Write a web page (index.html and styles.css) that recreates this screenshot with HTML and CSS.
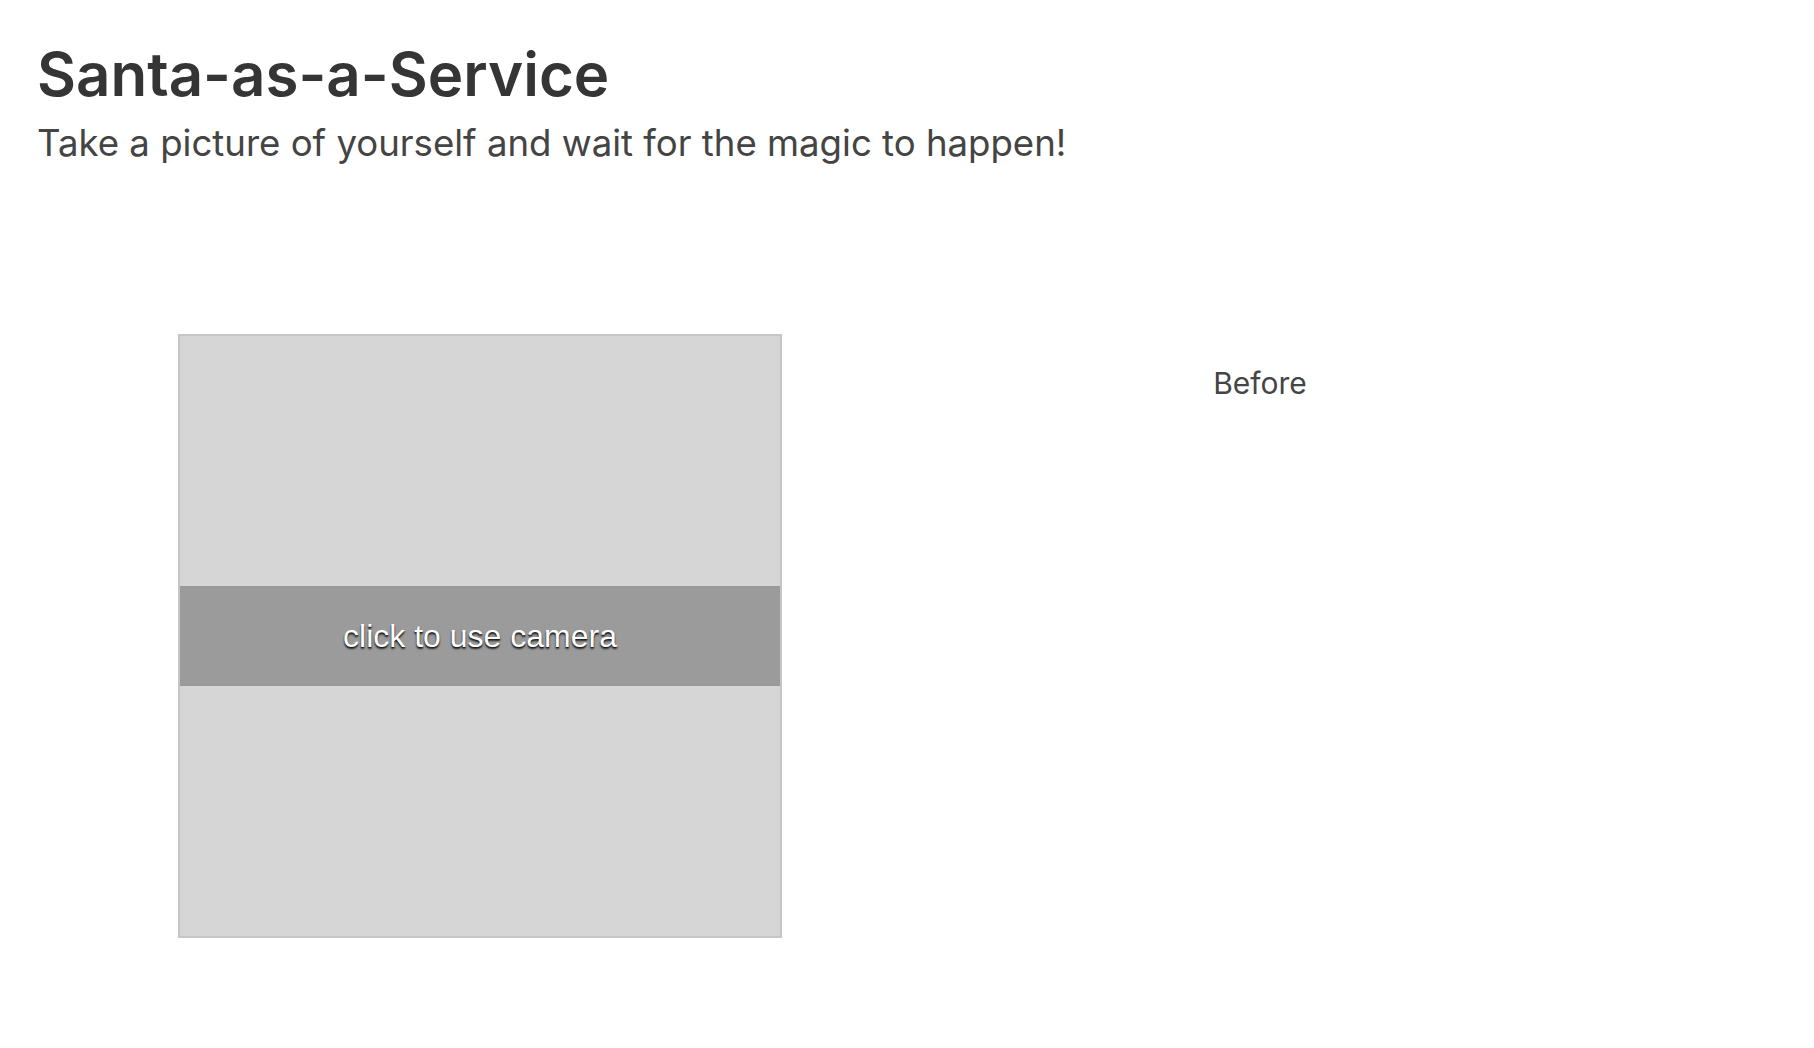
FILE: index.html
```html
<!DOCTYPE html>
<html lang="en">
<head>
<meta charset="utf-8">
<title>Santa-as-a-Service</title>
<link rel="stylesheet" href="styles.css">
</head>
<body>
<header class="header">
  <h1 class="title">Santa-as-a-Service</h1>
  <p class="subtitle">Take a picture of yourself and wait for the magic to happen!</p>
</header>
<main class="stage">
  <section class="col col-left">
    <div class="camera">
      <div class="camera-band">click to use camera</div>
    </div>
  </section>
  <section class="col col-right">
    <div class="label">Before</div>
  </section>
</main>
</body>
</html>
```
FILE: styles.css
```css
html, body {
  margin: 0;
  padding: 0;
  background: #ffffff;
}
body {
  font-family: Inter, "Noto Sans", "Liberation Sans", sans-serif;
  color: #333333;
}
.header {
  padding: 38px 37px 0 37px;
}
.title {
  margin: 0;
  font-size: 60px;
  font-weight: 600;
  line-height: 72px;
  color: #353535;
}
.subtitle {
  margin: 11px 0 0 0;
  font-size: 36.6px;
  font-weight: 400;
  line-height: 44px;
  color: #444444;
}
.stage {
  display: flex;
  padding-left: 90px;
  margin-top: 169px;
}
.col {
  width: 780px;
  display: flex;
  justify-content: center;
  align-items: flex-start;
}
.camera {
  width: 600px;
  height: 600px;
  border: 2px solid #c6c6c6;
  background: #d6d6d6;
  display: flex;
  align-items: center;
}
.camera-band {
  width: 100%;
  height: 100px;
  background: #9b9b9b;
  display: flex;
  align-items: center;
  justify-content: center;
  font-family: "Liberation Sans", Arial, sans-serif;
  font-size: 32px;
  color: #ffffff;
  text-shadow: 0 2px 2px rgba(0, 0, 0, 0.75), 0 1px 1px rgba(0, 0, 0, 0.6);
  cursor: pointer;
}
.col-right {
  padding-top: 31px;
}
.label {
  font-size: 30px;
  line-height: 36px;
  color: #454545;
}
```
